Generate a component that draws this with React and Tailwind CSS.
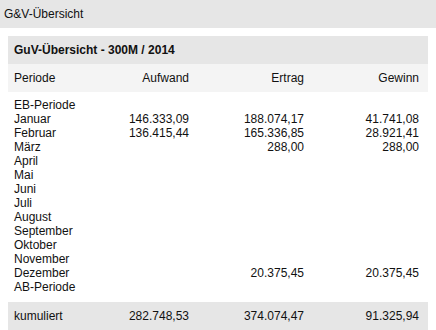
const rows = [
  ["EB-Periode", "", "", ""],
  ["Januar", "146.333,09", "188.074,17", "41.741,08"],
  ["Februar", "136.415,44", "165.336,85", "28.921,41"],
  ["März", "", "288,00", "288,00"],
  ["April", "", "", ""],
  ["Mai", "", "", ""],
  ["Juni", "", "", ""],
  ["Juli", "", "", ""],
  ["August", "", "", ""],
  ["September", "", "", ""],
  ["Oktober", "", "", ""],
  ["November", "", "", ""],
  ["Dezember", "", "20.375,45", "20.375,45"],
  ["AB-Periode", "", "", ""],
];

const cols = "grid grid-cols-[60px_115px_115px_115px]";

export default function App() {
  return (
    <div className="w-[436px] h-[330px] overflow-hidden bg-white text-[12px] text-[#111] font-['Liberation_Sans',Arial,sans-serif]">
      {/* Window title */}
      <div className="h-[28px] bg-[#e6e6e6] flex items-center px-1">G&amp;V-Übersicht</div>

      <div className="mx-2 mt-2">
        <div className="h-[28px] bg-[#e6e6e6] flex items-center px-1.5 font-bold">
          GuV-Übersicht - 300M / 2014
        </div>
        <div className={`${cols} h-[28px] items-center bg-[#f4f4f4] px-1.5`}>
          <span>Periode</span>
          <span className="text-right">Aufwand</span>
          <span className="text-right">Ertrag</span>
          <span className="text-right">Gewinn</span>
        </div>
        <div className="px-1.5 pt-[6px] pb-[8px]">
          {rows.map(([label, a, e, g]) => (
            <div key={label} className={`${cols} h-[14px] leading-[14px]`}>
              <span className="whitespace-nowrap">{label}</span>
              <span className="text-right">{a}</span>
              <span className="text-right">{e}</span>
              <span className="text-right">{g}</span>
            </div>
          ))}
        </div>
        <div className={`${cols} h-[28px] items-center bg-[#e6e6e6] px-1.5`}>
          <span>kumuliert</span>
          <span className="text-right">282.748,53</span>
          <span className="text-right">374.074,47</span>
          <span className="text-right">91.325,94</span>
        </div>
      </div>
    </div>
  );
}
